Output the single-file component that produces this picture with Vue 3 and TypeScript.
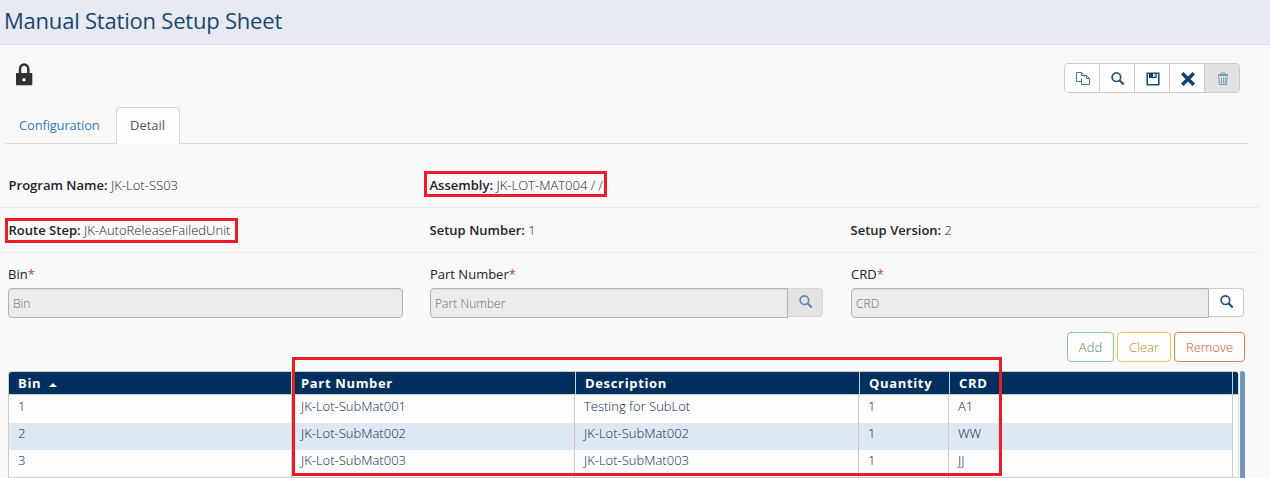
<script setup lang="ts">
interface Row {
  bin: string
  part: string
  description: string
  quantity: string
  crd: string
}

const tools = ['copy', 'search', 'save', 'close', 'trash']

const rows: Row[] = [
  { bin: '1', part: 'JK-Lot-SubMat001', description: 'Testing for SubLot', quantity: '1', crd: 'A1' },
  { bin: '2', part: 'JK-Lot-SubMat002', description: 'JK-Lot-SubMat002', quantity: '1', crd: 'WW' },
  { bin: '3', part: 'JK-Lot-SubMat003', description: 'JK-Lot-SubMat003', quantity: '1', crd: 'JJ' },
]
</script>

<template>
  <main class="page">
    <header class="title-bar"><h1>Manual Station Setup Sheet</h1></header>

    <div class="actions">
      <svg class="lock" viewBox="0 0 17 23" width="17" height="23">
        <path d="M4 11V6.3C4 3.6 5.7 1.5 8.100 1.5s4.200 2.100 4.200 4.800V11" fill="none" stroke="#303133" stroke-width="2.500" />
        <rect x="0" y="10" width="16.300" height="12.200" rx="0.800" fill="#303133" />
        <circle cx="8" cy="16.800" r="1.700" fill="#fff" />
      </svg>
      <div class="toolbar">
        <button v-for="t in tools" :key="t" type="button" :class="['tool', { off: t === 'trash' }]">
          <svg v-if="t === 'copy'" viewBox="0 0 14 14" width="14" height="14" fill="none" stroke="#4a729f" stroke-width="1">
            <path d="M5 9.500H.5V.5h5l3 3v1M5.500.5v3h3" />
            <path d="M5.500 6.500V12.500h8v-6l-3-3h-2M10.500 3.500v3h3" />
          </svg>
          <svg v-else-if="t === 'search'" viewBox="0 0 14 14" width="14" height="14" fill="none" stroke="#245484">
            <circle cx="5.400" cy="5.200" r="4.300" stroke-width="1.700" />
            <path d="M8.500 8.300l4.200 4.200" stroke-width="2.200" />
          </svg>
          <svg v-else-if="t === 'save'" viewBox="0 0 14 14" width="14" height="14">
            <path d="M1.200 1.200h11.600v11.600H1.200z" fill="none" stroke="#1d4f81" stroke-width="1.600" />
            <path d="M3 1h4v5H3zM7 4.800h3.500V6H7zM9.500 1h1.200v5H9.500z" fill="#0f4478" />
            <path d="M7.600 1.500h1.200v3.300H7.600z" fill="#9db4cb" />
          </svg>
          <svg v-else-if="t === 'close'" viewBox="0 0 14 14" width="14" height="14">
            <path d="M2.500 2.500l9 9M11.500 2.500l-9 9" stroke="#0f4478" stroke-width="3.600" stroke-linecap="square" />
          </svg>
          <svg v-else viewBox="0 0 14 14" width="14" height="14" fill="none" stroke="#7b99ba">
            <path d="M2.700 4.500l.8 8h7l.8-8M5.500 5.500v6M7.500 5.500v6M9.300 5.500v6" stroke-width="1" />
            <path d="M2 3h10" stroke-width="1.800" />
            <path d="M5 2V1h4v1" stroke-width="1" />
          </svg>
        </button>
      </div>
    </div>

    <nav class="tabs">
      <a class="tab">Configuration</a>
      <a class="tab active">Detail</a>
    </nav>

    <section class="info first">
      <div><b>Program Name:</b> JK-Lot-SS03</div>
      <div class="marked assembly"><b>Assembly:</b> JK-LOT-MAT004 / /</div>
    </section>
    <section class="info">
      <div class="marked route"><b>Route Step:</b> JK-AutoReleaseFailedUnit</div>
      <div><b>Setup Number:</b> 1</div>
      <div><b>Setup Version:</b> 2</div>
    </section>

    <section class="fields">
      <div class="field bin">
        <label>Bin<i>*</i></label>
        <div class="group"><input placeholder="Bin" disabled /></div>
      </div>
      <div class="field">
        <label>Part Number<i>*</i></label>
        <div class="group">
          <input class="joined" placeholder="Part Number" disabled />
          <button type="button" class="lookup off">
            <svg viewBox="0 0 14 14" width="14" height="14" fill="none" stroke="#6389ae">
              <circle cx="5.400" cy="5.200" r="4.300" stroke-width="1.700" />
              <path d="M8.500 8.300l4.200 4.200" stroke-width="2.200" />
            </svg>
          </button>
        </div>
      </div>
      <div class="field">
        <label>CRD<i>*</i></label>
        <div class="group">
          <input class="joined" placeholder="CRD" disabled />
          <button type="button" class="lookup">
            <svg viewBox="0 0 14 14" width="14" height="14" fill="none" stroke="#245484">
              <circle cx="5.400" cy="5.200" r="4.300" stroke-width="1.700" />
              <path d="M8.500 8.300l4.200 4.200" stroke-width="2.200" />
            </svg>
          </button>
        </div>
      </div>
    </section>

    <div class="buttons">
      <button type="button" class="btn add">Add</button>
      <button type="button" class="btn clear">Clear</button>
      <button type="button" class="btn remove">Remove</button>
    </div>

    <section class="table-wrap">
      <div class="table">
        <div class="line head">
          <span>Bin <svg class="sort" viewBox="0 0 8 4" width="8" height="4"><path d="M0 4L4 0l4 4z" fill="#fff" /></svg></span>
          <span>Part Number</span><span>Description</span><span>Quantity</span><span>CRD</span><span class="end"></span>
        </div>
        <div v-for="r in rows" :key="r.bin" class="line">
          <span>{{ r.bin }}</span><span>{{ r.part }}</span><span>{{ r.description }}</span>
          <span>{{ r.quantity }}</span><span>{{ r.crd }}</span><span class="end"></span>
        </div>
      </div>
      <div class="scroll"></div>
      <div class="outline"></div>
    </section>
  </main>
</template>

<style>
body {
  margin: 0;
  overflow: hidden;
  background: #f9f9f9;
}
</style>

<style scoped>
*,
*::after {
  box-sizing: border-box;
}
.page {
  width: 1270px;
  height: 478px;
  overflow: hidden;
  background: #f9f9f9;
  font: 300 13px/18px 'Open Sans', sans-serif;
  color: #222326;
}
button {
  font: inherit;
  padding: 0;
}
.title-bar {
  height: 45px;
  padding: 4px 0 0 4px;
  background: #e7eaf3;
  border-bottom: 1px solid #d9dce7;
}
h1 {
  margin: 0;
  font-size: 22px;
  line-height: 32px;
  font-weight: 400;
  letter-spacing: -0.21px;
  color: #17466f;
}
.actions {
  height: 62px;
  padding: 18px 30px 0 16px;
  display: flex;
  justify-content: space-between;
  align-items: flex-start;
}
.toolbar {
  display: flex;
  border: 1px solid #ccc;
  border-radius: 4px;
  overflow: hidden;
  height: 30px;
}
.tool {
  width: 35px;
  border: 0;
  border-right: 1px solid #ccc;
  background: #fff;
  display: flex;
  align-items: center;
  justify-content: center;
  padding: 1px 0 0 1px;
}
.tool.off {
  width: 34px;
  background: #e2e2e2;
  border: 0;
}
.tabs {
  height: 37px;
  margin: 0 21px 0 5px;
  border-bottom: 1px solid #ddd;
  display: flex;
}
.tab {
  width: 110px;
  padding: 8px 0 0 13px;
  height: 37px;
  font-weight: 400;
  letter-spacing: -0.18px;
  color: #3b7ab8;
  border: 1px solid transparent;
  border-bottom: 0;
}
.tab.active {
  width: 64px;
  margin-left: 1px;
  letter-spacing: 0;
  color: #555;
  background: #fdfdfd;
  border-color: #d8d8d8;
  border-radius: 4px 4px 0 0;
}
.info {
  height: 45px;
  width: 1260px;
  padding-left: 8.500px;
  border-bottom: 1px solid #ececec;
  display: grid;
  grid-template-columns: 421px 421px 1fr;
  align-items: center;
  letter-spacing: 0.02px;
}
.info.first {
  height: 64px;
  padding-top: 19px;
}
.info b {
  font-weight: 600;
}
.marked {
  position: relative;
}
.marked::after {
  content: '';
  position: absolute;
  border: 3px solid #ed1c24;
}
.assembly::after {
  left: -5.500px;
  top: -5px;
  width: 183px;
  height: 26px;
}
.route::after {
  left: -3.500px;
  top: -3px;
  width: 233px;
  height: 25px;
}
.fields {
  height: 65px;
  padding: 12px 0 0 8px;
  display: grid;
  grid-template-columns: 422px 421px 393px;
}
label {
  display: block;
  height: 23px;
  font-weight: 400;
}
label i {
  font-style: normal;
  color: #d0383c;
}
.group {
  display: flex;
  width: 393px;
}
.bin .group {
  width: 395px;
}
input {
  flex: 1;
  min-width: 0;
  height: 30px;
  padding: 0 4px;
  font: inherit;
  font-size: 12px;
  letter-spacing: 0.05px;
  background: #ececec;
  border: 1px solid #b1b4b7;
  border-radius: 4px;
  box-shadow: inset 0 1px 1px rgba(0, 0, 0, 0.08);
}
input::placeholder {
  color: #6c6c6c;
  opacity: 1;
}
input.joined {
  border-radius: 4px 0 0 4px;
}
.lookup {
  width: 35px;
  height: 29px;
  border: 1px solid #ccc;
  border-left: 0;
  border-radius: 0 4px 4px 0;
  background: #fff;
  display: flex;
  align-items: center;
  justify-content: center;
  padding: 0 0 1px 1px;
}
.lookup.off {
  background: #e3e3e3;
  border-color: #d5d5d5;
}
.buttons {
  display: flex;
  justify-content: flex-end;
  gap: 3px;
  padding: 14px 25px 0 0;
}
.btn {
  height: 30px;
  border: 1px solid;
  border-radius: 4px;
  background: #fdfdfd;
}
.add {
  width: 47px;
  border-color: #8ccb94;
  color: #4e9158;
}
.clear {
  width: 54px;
  border-color: #f0c752;
  color: #c98623;
}
.remove {
  width: 71px;
  border-color: #e2805b;
  color: #d5522a;
}
.table-wrap {
  position: relative;
  margin: 9px 0 0 8px;
  width: 1237px;
  display: flex;
  justify-content: space-between;
}
.table {
  width: 1231px;
  border: 1px solid #ccc;
  border-right-color: #ddd;
  border-radius: 4px 4px 0 0;
  overflow: hidden;
  background: #fdfdfd;
}
.line {
  display: grid;
  grid-template-columns: 283px 283px 284px 90px 284px 1fr;
  height: 27px;
  color: #0d2a47;
}
.line > span {
  border-right: 1px solid #ccc;
  padding: 1px 0 0 9px;
}
.line > span.end {
  border: 0;
  background: #fdfdfd;
}
.line:nth-child(2) {
  height: 28px;
}
.line:nth-child(2) > span {
  padding-top: 2px;
}
.line:nth-child(3) {
  background: #dee8f2;
}
.head {
  height: 23px;
  grid-template-columns: 283px 284px 284px 90px 283px 1fr;
  background: #00305e;
  color: #fff;
  font-weight: 700;
  letter-spacing: 0.66px;
  border-bottom: 1px solid #ccc;
}
.line.head > span {
  padding-top: 2px;
}
.head > span.end {
  background: #00305e;
}
.sort {
  margin-left: 4px;
  vertical-align: 1px;
}
.scroll {
  width: 5px;
  height: 107px;
  background: #7299ba;
  border-radius: 2px 3px 0 0;
}
.outline {
  position: absolute;
  left: 284px;
  top: -14px;
  width: 710px;
  height: 119px;
  border: 3px solid #ed1c24;
}
</style>
